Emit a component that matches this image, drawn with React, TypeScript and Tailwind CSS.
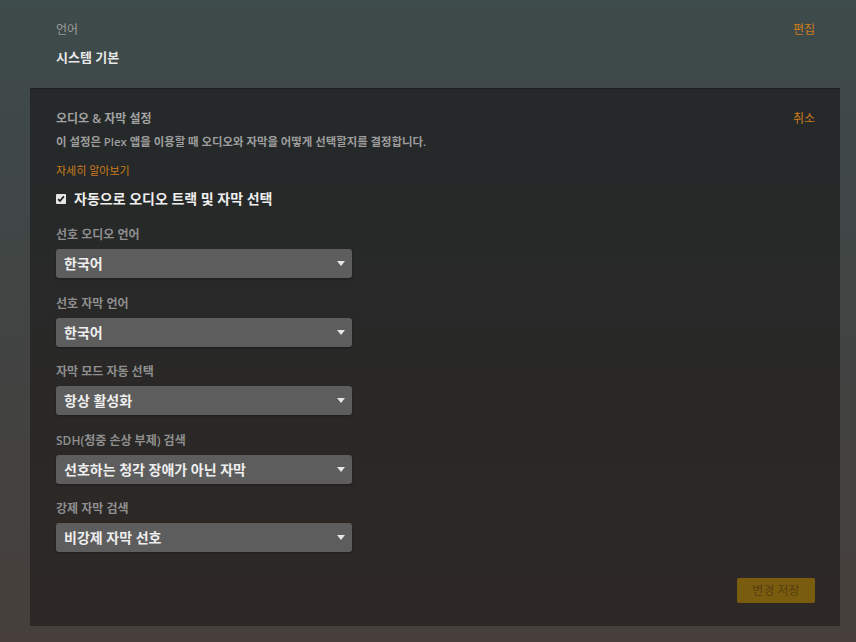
const FONT = { fontFamily: '"Open Sans", "Noto Sans CJK KR", sans-serif' }

const FIELDS = [
  { label: '선호 오디오 언어', value: '한국어' },
  { label: '선호 자막 언어', value: '한국어' },
  { label: '자막 모드 자동 선택', value: '항상 활성화' },
  { label: 'SDH(청중 손상 부제) 검색', value: '선호하는 청각 장애가 아닌 자막' },
  { label: '강제 자막 검색', value: '비강제 자막 선호' },
]

function SelectBox({ label, value }: { label: string; value: string }) {
  return (
    <div className="flex flex-col">
      <label className="text-[12px] font-semibold leading-4 text-[#8f8f8f]">{label}</label>
      <div className="mt-[6px] flex h-[29px] w-[296px] items-center justify-between rounded-[3px] bg-[#5d5d5d] pl-2 pr-[7px] shadow-[0_1px_2px_rgba(0,0,0,0.3)]">
        <span className="text-[14px] font-semibold text-[#eeeeee]">{value}</span>
        <svg width="8" height="5" viewBox="0 0 8 5">
          <path d="M0 0h8L4 5z" fill="#e6e6e6" />
        </svg>
      </div>
    </div>
  )
}

export default function App() {
  return (
    <div
      style={FONT}
      className="flex h-[642px] w-[856px] flex-col bg-gradient-to-b from-[#3e4b4b] via-[#414443] to-[#463f3b]"
    >
      <div className="flex items-start justify-between px-[56px] pt-[22px]">
        <div>
          <p className="text-[12px] leading-4 text-[#9b9b9b]">언어</p>
          <p className="mt-[11px] text-[13px] font-semibold leading-4 text-[#e8e8e8]">시스템 기본</p>
        </div>
        <button className="mr-[-15px] text-[12px] leading-4 text-[#cc7b19]">편집</button>
      </div>

      <div className="ml-[30px] mr-[16px] mt-[23px] flex h-[538px] flex-col border-t border-[#1d2020] bg-gradient-to-b from-[#25292a] to-[#2d2825] pl-[26px] pr-[25px] pt-[22px]">
        <div className="flex items-start justify-between">
          <p className="text-[12px] font-semibold leading-4 text-[#a3a3a3]">오디오 &amp; 자막 설정</p>
          <button className="text-[12px] leading-4 text-[#cc7b19]">취소</button>
        </div>
        <p className="mt-[7px] text-[11.4px] font-semibold leading-4 text-[#9d9d9d]">
          이 설정은 Plex 앱을 이용할 때 오디오와 자막을 어떻게 선택할지를 결정합니다.
        </p>
        <p className="mt-[13px] text-[11px] leading-4 text-[#cc7b19]">자세히 알아보기</p>

        <div className="mt-[9px] flex items-center gap-[8px]">
          <span className="flex h-[10px] w-[10px] items-center justify-center rounded-[1px] bg-[#e6e6e6]">
            <svg width="8" height="8" viewBox="0 0 7 7">
              <path d="M1 3.6l1.6 1.7L6 1.2" stroke="#222" strokeWidth="1.5" fill="none" />
            </svg>
          </span>
          <span className="text-[14px] font-semibold text-[#eeeeee]">자동으로 오디오 트랙 및 자막 선택</span>
        </div>

        <div className="mt-[18px] flex flex-col gap-[17.5px]">
          {FIELDS.map((f) => (
            <SelectBox key={f.label} label={f.label} value={f.value} />
          ))}
        </div>

        <div className="mt-[26px] flex justify-end">
          <button className="flex h-[25px] w-[78px] items-center justify-center rounded-[2px] bg-[#7a5c0f] text-[12px] text-[#553f0f]">
            변경 저장
          </button>
        </div>
      </div>
    </div>
  )
}
